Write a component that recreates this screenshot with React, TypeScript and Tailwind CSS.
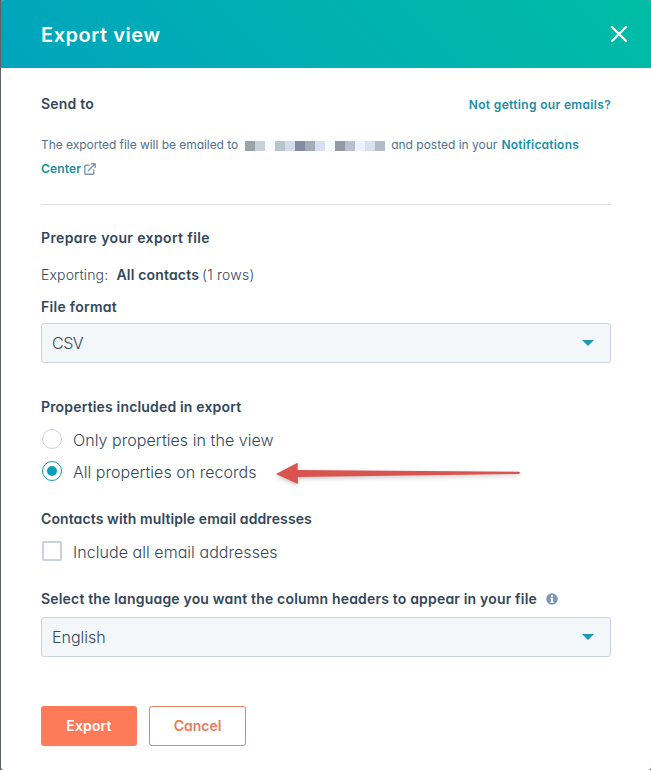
import React from "react";

const mosaic = [
  "bg-[#9aa4ab]", "bg-[#c8d0dc]", "bg-[#f5fbff]", "bg-[#b8c4ce]", "bg-[#d3dbec]",
  "bg-[#828ca3]", "bg-[#a3adb8]", "bg-[#d8dff0]", "bg-[#f5fcff]", "bg-[#929ba3]",
  "bg-[#b8c0cf]", "bg-[#eaf3ff]", "bg-[#d9e1ec]", "bg-[#b2bbc8]",
];

function Heading({ children, className = "" }: { children: React.ReactNode; className?: string }) {
  return <h2 className={`whitespace-nowrap text-[14px] font-semibold leading-5 ${className}`}>{children}</h2>;
}

function Select({ value, className = "" }: { value: string; className?: string }) {
  return (
    <button className={`flex h-10 w-full items-center justify-between rounded-[3px] border border-[#cbd3df] bg-[#f4f7fa] pl-[10px] pr-4 text-left text-[16px] font-[350] ${className}`}>
      <span>{value}</span>
      <svg width="12" height="6" viewBox="0 0 12 6"><path d="M0 0H12L6 6Z" fill="#1b9bb0" /></svg>
    </button>
  );
}

export default function App() {
  return (
    <div className="h-[770px] w-[651px] overflow-hidden bg-[#5d616a] font-['Inter','Lato',sans-serif] text-[#33475b] [font-feature-settings:'cv11']">
      <div className="ml-px h-[770px] overflow-hidden rounded-[3px] bg-white">
        <header className="flex h-[68px] items-center justify-between bg-[linear-gradient(45deg,#00a4bd,#00bda5)] pl-10 pr-[23px] text-white">
          <h1 className="pt-0.5 text-[20px] font-semibold leading-6 tracking-[0.52px]">Export view</h1>
          <svg width="18" height="18" viewBox="0 0 18 18"><path d="M2 2L16 16M16 2L2 16" stroke="white" strokeWidth="2.3" strokeLinecap="round" /></svg>
        </header>
        <main className="pl-10 pr-10 pt-[26px]">
          <div className="flex h-5 items-center justify-between">
            <Heading className="tracking-[0.2px]">Send to</Heading>
            <a className="pt-0.5 text-[12px] font-semibold tracking-[0.33px] text-[#178fa5]">Not getting our emails?</a>
          </div>
          <div className="mt-[19px] whitespace-nowrap text-[12px] leading-6 text-[#516f90]">
            <div className="flex h-6 items-center">
              <span className="tracking-[-0.05px]">The exported file will be emailed to</span>
              <span className="ml-[7px] mr-[6px] flex pt-0.5">
                {mosaic.map((c, i) => <i key={i} className={`h-[10px] w-[10px] ${c}`} />)}
              </span>
              <span>and posted in your</span>
              <a className="ml-1 font-semibold tracking-[0.22px] text-[#178fa5]">Notifications</a>
            </div>
            <div className="flex h-6 items-center">
              <a className="font-semibold tracking-[0.15px] text-[#178fa5]">Center</a>
              <svg className="ml-[3px]" width="12" height="12" viewBox="0 0 12 12" fill="none" stroke="#7c98b6" strokeWidth="1.4" strokeLinecap="round" strokeLinejoin="round"><path d="M5 2.2H1.8Q.8 2.2 .8 3.2V10.2Q.8 11.2 1.8 11.2H8.8Q9.8 11.2 9.8 10.2V7M4.2 7.8L11 1M7.5 .8H11.2V4.5" /></svg>
            </div>
          </div>
          <hr className="mt-[23px] border-[#dcdfe3]" />
          <Heading className="mt-[23px] tracking-[0.38px]">Prepare your export file</Heading>
          <p className="mt-4 flex h-5 items-center whitespace-nowrap text-[14px] font-[350]">
            <span className="w-[67px] tracking-[0.15px]">Exporting:</span><b className="ml-[8.5px] font-semibold tracking-[0.17px]">All contacts</b><span className="ml-[3px] tracking-[0.22px]">(1 rows)</span>
          </p>
          <Heading className="mt-[13px] tracking-[0.28px]">File format</Heading>
          <Select value="CSV" className="mt-[6px] tracking-[-0.5px]" />
          <Heading className="mt-[34px] tracking-[0.17px]">Properties included in export</Heading>
          <div className="relative mt-3 text-[16px] font-[350]">
            <label className="flex h-[22px]">
              <i className="ml-px h-5 w-5 rounded-full border border-[#cbd0e0]" />
              <span className="ml-[11px] leading-[22px] tracking-[0.06px]">Only properties in the view</span>
            </label>
            <label className="mt-[10px] flex h-[22px]">
              <i className="ml-px flex h-5 w-5 items-center justify-center rounded-full border-[1.5px] border-[#1799ad]"><i className="h-[10px] w-[10px] rounded-full bg-[#0a9fb8]" /></i>
              <span className="ml-[11px] leading-[22px] tracking-[0.03px]">All properties on records</span>
            </label>
            <svg className="absolute left-[234px] top-[30px] drop-shadow-[0_2px_2px_rgba(0,0,0,0.2)]" width="247" height="28" viewBox="0 0 247 28"><path d="M2 14.5L22 4Q23 4 22.7 5L22.7 11L244 12.7Q246 13.8 244 15L22.7 18L23 24Q22.5 25 21.5 24.5L2 15.5Q1 15 2 14.5Z" fill="#d9534f" /></svg>
          </div>
          <Heading className="mt-[26px] tracking-[0.1px]">Contacts with multiple email addresses</Heading>
          <label className="mt-3 flex h-[22px] text-[16px] font-[350]">
            <i className="ml-px h-5 w-5 rounded-[2px] border-2 border-[#cbd0e0]" />
            <span className="ml-[11px] leading-[22px] tracking-[0.05px]">Include all email addresses</span>
          </label>
          <div className="mt-[26px] flex h-5 items-center">
            <Heading className="tracking-[0.18px]">Select the language you want the column headers to appear in your file</Heading>
            <svg className="ml-[9px]" width="12" height="12" viewBox="0 0 12 12"><circle cx="6" cy="6" r="5.8" fill="#7c98b6" /><path d="M5 2H7V3.7H5ZM4.5 4.8H7V8.6H7.7V9.8H4.3V8.6H5V6H4.5Z" fill="white" /></svg>
          </div>
          <Select value="English" className="mt-2" />
          <div className="mt-[49px] flex gap-3 text-[14px] font-semibold">
            <button className="h-10 w-24 rounded-[3px] bg-[#ff7a59] pb-0.5 tracking-[0.15px] text-white">Export</button>
            <button className="h-10 w-[97px] rounded-[3px] border border-[#e08368] pb-0.5 text-[#e87c5d]">Cancel</button>
          </div>
        </main>
      </div>
    </div>
  );
}
